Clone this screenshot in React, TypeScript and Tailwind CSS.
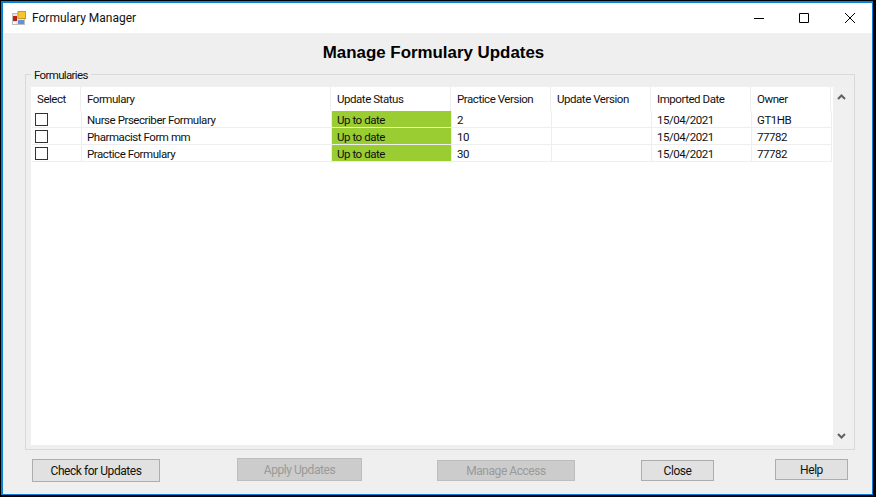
const columns = [
  { label: "Select", width: "w-[50px]" },
  { label: "Formulary", width: "w-[250px]" },
  { label: "Update Status", width: "w-[120px]" },
  { label: "Practice Version", width: "w-[100px]" },
  { label: "Update Version", width: "w-[100px]" },
  { label: "Imported Date", width: "w-[100px]" },
  { label: "Owner", width: "w-[80px]" },
];

const rows = [
  { name: "Nurse Prsecriber Formulary", practice: "2", date: "15/04/2021", owner: "GT1HB" },
  { name: "Pharmacist Form mm", practice: "10", date: "15/04/2021", owner: "77782" },
  { name: "Practice Formulary", practice: "30", date: "15/04/2021", owner: "77782" },
];

function AppIcon() {
  return (
    <svg width="14" height="14" viewBox="0 0 14 14" className="shrink-0">
      <rect x="0" y="2" width="13" height="12" fill="#bdbdbd" />
      <rect x="1" y="3" width="11" height="10" fill="#e4e4e4" />
      <rect x="1" y="5" width="4" height="5" fill="#b8201a" />
      <rect x="6" y="0.5" width="7.5" height="7" fill="#f7c62f" stroke="#c89b22" strokeWidth="1" />
      <rect x="6" y="9" width="6" height="4" fill="#5f94dc" />
      <rect x="1" y="11" width="3" height="2" fill="#ffffff" />
    </svg>
  );
}

function Cell({ width, children, className = "" }: { width: string; children?: React.ReactNode; className?: string }) {
  return (
    <div className={`${width} shrink-0 border-r border-b border-[#eeeeee] h-[17px] pl-[5px] leading-[18px] truncate ${className}`}>
      {children}
    </div>
  );
}

export default function App() {
  return (
    <div className="w-[876px] h-[497px] bg-black pl-px pt-px pr-[3px] pb-[2px] font-['Roboto',sans-serif] text-[12px] tracking-[-0.45px] text-[#111]">
      <div className="h-full border-l-2 border-t-2 border-r border-b border-[#0c7fd6] bg-[#efefef] flex flex-col">
        <div className="h-[30px] bg-white flex items-center shrink-0 tracking-normal">
          <div className="ml-[9px] mr-[6px]">
            <AppIcon />
          </div>
          <span>Formulary Manager</span>
          <div className="ml-auto flex items-center mr-[17px] text-black">
            <svg width="10" height="10" viewBox="0 0 10 10"><path d="M0 5.5H10" stroke="currentColor" fill="none" /></svg>
            <svg width="10" height="10" viewBox="0 0 10 10" className="ml-[35px]"><path d="M.5.5h9v9h-9z" stroke="currentColor" fill="none" /></svg>
            <svg width="10" height="10" viewBox="0 0 10 10" className="ml-[36px]"><path d="M0 0L10 10M10 0L0 10" stroke="currentColor" fill="none" /></svg>
          </div>
        </div>

        <h1 className="text-center font-bold text-[16.9px] tracking-normal mt-[10px] pr-[8px] leading-[20px] text-black font-['Liberation_Sans',sans-serif]">
          Manage Formulary Updates
        </h1>

        <div className="relative ml-[22px] mr-[17px] mt-[11px] h-[376px] border border-[#d9d9d9] pl-[5px] pr-[4px] pt-[12px] pb-[4px]">
          <span className="absolute left-[5px] -top-[7px] bg-[#efefef] px-[3px] text-[11.5px] tracking-[-0.65px] leading-[14px]">Formularies</span>
          <div className="h-full flex">
            <div className="flex-1 min-w-0 bg-white text-[11.5px] tracking-[-0.45px]">
              <div className="flex h-[24px]">
                {columns.map((c) => (
                  <div key={c.label} className={`${c.width} shrink-0 border-r border-[#eeeeee] pl-[6px] leading-[24px] truncate`}>
                    {c.label}
                  </div>
                ))}
              </div>
              {rows.map((r) => (
                <div key={r.name} className="flex ml-px">
                  <Cell width="w-[50px]" className="flex items-center !pl-[3px]">
                    <span className="block w-[13px] h-[13px] border border-[#333] bg-white" />
                  </Cell>
                  <Cell width="w-[250px]">{r.name}</Cell>
                  <Cell width="w-[120px]" className="bg-[#9acd32]">Up to date</Cell>
                  <Cell width="w-[100px]">{r.practice}</Cell>
                  <Cell width="w-[100px]" />
                  <Cell width="w-[100px]">{r.date}</Cell>
                  <Cell width="w-[80px]">{r.owner}</Cell>
                </div>
              ))}
            </div>
            <div className="w-[17px] shrink-0 bg-[#f0f0f0] flex flex-col justify-between items-center pt-[7px] pb-[6px] text-[#606060]">
              <svg width="9" height="6" viewBox="0 0 9 6"><path d="M1 5L4.5 1.5L8 5" stroke="currentColor" strokeWidth="2" fill="none" /></svg>
              <svg width="9" height="6" viewBox="0 0 9 6"><path d="M1 1L4.5 4.5L8 1" stroke="currentColor" strokeWidth="2" fill="none" /></svg>
            </div>
          </div>
        </div>

        <div className="flex items-start pl-[29px] pt-[8px]">
          <button className="w-[128px] h-[23px] mt-px border border-[#adadad] bg-[#e1e1e1]">Check for Updates</button>
          <button disabled className="ml-[77px] w-[125px] h-[23px] border border-[#bdbdbd] bg-[#cccccc] text-[#9a9a9a]">Apply Updates</button>
          <button disabled className="ml-[75px] w-[138px] h-[21px] mt-[2px] border border-[#bdbdbd] bg-[#cccccc] text-[#9a9a9a]">Manage Access</button>
          <button className="ml-[66px] w-[73px] h-[21px] mt-[2px] border border-[#adadad] bg-[#e1e1e1]">Close</button>
          <button className="ml-[61px] w-[73px] h-[21px] mt-px border border-[#adadad] bg-[#e1e1e1]">Help</button>
        </div>
      </div>
    </div>
  );
}
